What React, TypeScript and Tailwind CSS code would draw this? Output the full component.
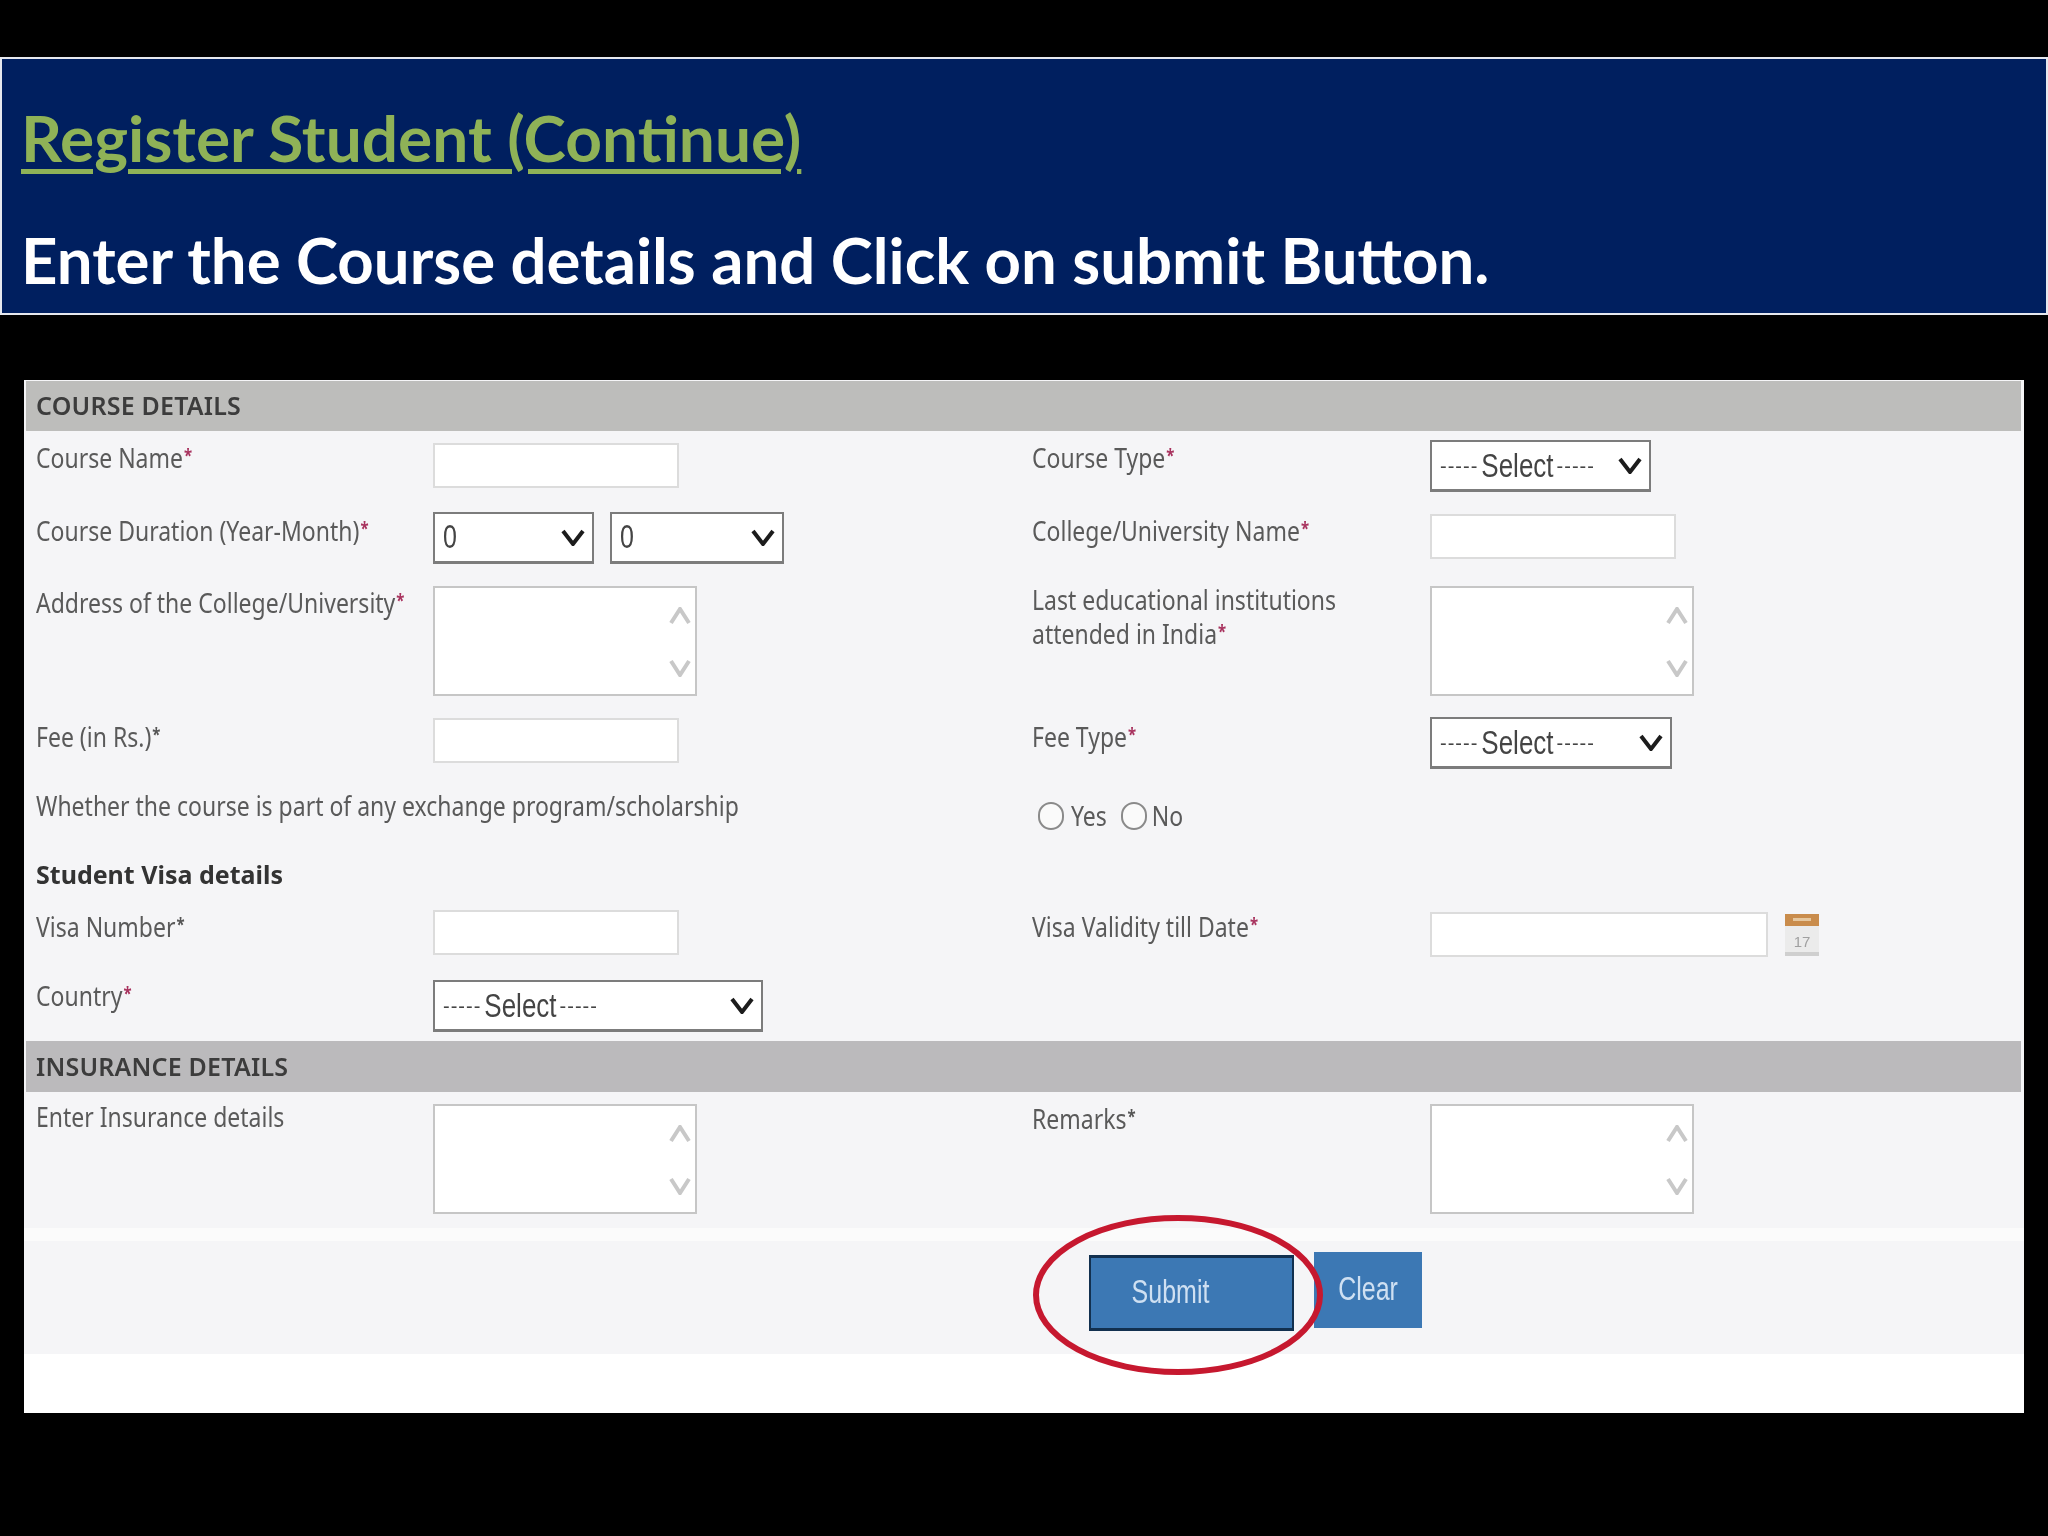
import type { ReactNode } from "react";

const Star = ({ dark = false }: { dark?: boolean }) => (
  <span className={`relative -top-[5px] ml-[1px] text-[15px] font-bold ${dark ? "text-[#555]" : "text-[#a8325e]"}`}>*</span>
);

function Label({ children, className = "" }: { children: ReactNode; className?: string }) {
  return (
    <div className={`origin-top-left scale-y-[1.2] text-[23px] leading-[29px] text-[#5a5a5a] ${className}`}>
      {children}
    </div>
  );
}

function TextBox({ className = "" }: { className?: string }) {
  return <input className={`block h-[45px] border-2 border-[#dcdcdc] bg-white ${className}`} />;
}

function Arrow({ down = false }: { down?: boolean }) {
  return (
    <svg viewBox="0 0 22 18" className="h-[18px] w-[22px]" fill="none" stroke="#c8c8c8" strokeWidth="4">
      <polyline points={down ? "2,2 11,16 20,2" : "2,16 11,2 20,16"} />
    </svg>
  );
}

function Memo({ className = "" }: { className?: string }) {
  return (
    <div className={`relative h-[110px] ${className}`}>
      <textarea className="block h-full w-full resize-none border-2 border-[#c6c6c6] bg-white" />
      <div className="absolute top-[21px] right-[6px] bottom-[19px] flex flex-col justify-between">
        <Arrow />
        <Arrow down />
      </div>
    </div>
  );
}

function SelectBox({ value, className = "" }: { value?: string; className?: string }) {
  return (
    <div className={`flex h-[52px] items-center justify-between border-2 border-b-[3px] border-[#7c7c7c] bg-white pr-[7px] pl-[8px] font-["Liberation_Sans",sans-serif] text-[#444] ${className}`}>
      {value ? (
        <span className="scale-y-[1.3] text-[25px]">{value}</span>
      ) : (
        <span className="flex items-center gap-[3px]">
          <span className="text-[20px] tracking-[1px]">-----</span>
          <span className="scale-y-[1.3] text-[26px]">Select</span>
          <span className="text-[20px] tracking-[1px]">-----</span>
        </span>
      )}
      <svg viewBox="0 0 24 17" className="h-[17px] w-[24px]" fill="none" stroke="#1c1c1c" strokeWidth="4">
        <polyline points="2,2 12,15 22,2" />
      </svg>
    </div>
  );
}

function Row({ className, children }: { className: string; children: ReactNode }) {
  return <div className={`grid grid-cols-[397px_599px_398px_1fr] pl-[12px] ${className}`}>{children}</div>;
}

function SectionBar({ title, className = "" }: { title: string; className?: string }) {
  return (
    <div className={`mr-[3px] ml-[2px] flex items-center pl-[10px] ${className}`}>
      <span className="text-[25px] font-semibold tracking-[0.2px] text-[#3c3c3c]">{title}</span>
    </div>
  );
}

function CalendarIcon() {
  return (
    <svg viewBox="0 0 34 42" className="mt-[2px] ml-[17px] h-[42px] w-[34px]">
      <rect x="0" y="0" width="34" height="12" fill="#c98c4c" />
      <rect x="8" y="4" width="18" height="3" fill="#e6c79e" />
      <rect x="0" y="12" width="34" height="30" fill="#ebebeb" />
      <rect x="0" y="38" width="34" height="4" fill="#cfcfcf" />
      <text x="17" y="33" textAnchor="middle" fontSize="15" fill="#a0a0a0" fontFamily="Liberation Sans, sans-serif">17</text>
    </svg>
  );
}

export default function App() {
  return (
    <div className="h-[1536px] overflow-hidden bg-black pt-[57px] font-['Noto_Sans',sans-serif]">
      <header className="h-[258px] border-2 border-[#e6e8ee] bg-[#001f5f] pt-[43px] pl-[19px] font-['Lato',sans-serif] font-bold">
        <h1 className="text-[64px] leading-[72px] text-[#8fb257] underline decoration-[5px] underline-offset-[7px]">
          Register Student (Continue)
        </h1>
        <p className="mt-[50px] text-[63.5px] leading-[72px] text-white">
          Enter the Course details and Click on submit Button.
        </p>
      </header>

      <main className="relative mx-[24px] mt-[65px] h-[1033px] bg-white">
        <div className="bg-[#f5f5f7] pt-[1px] blur-[0.6px]">
          <SectionBar title="COURSE DETAILS" className="h-[50px] bg-[#bdbdbb]" />

          <Row className="h-[74px]">
            <Label className="mt-[9px]">Course Name<Star /></Label>
            <TextBox className="mt-[12px] w-[246px]" />
            <Label className="mt-[9px]">Course Type<Star /></Label>
            <SelectBox className="mt-[9px] w-[221px]" />
          </Row>

          <Row className="h-[75px]">
            <Label className="mt-[8px]">Course Duration (Year-Month)<Star /></Label>
            <div className="mt-[7px] flex gap-[16px]">
              <SelectBox value="0" className="w-[161px]" />
              <SelectBox value="0" className="w-[174px]" />
            </div>
            <Label className="mt-[8px]">College/University Name<Star /></Label>
            <TextBox className="mt-[9px] w-[246px]" />
          </Row>

          <Row className="h-[130px]">
            <Label className="mt-[5px]">Address of the College/University<Star /></Label>
            <Memo className="mt-[6px] w-[264px]" />
            <Label className="mt-[2px]">
              Last educational institutions
              <br />
              attended in India<Star />
            </Label>
            <Memo className="mt-[6px] w-[264px]" />
          </Row>

          <Row className="h-[80px]">
            <Label className="mt-[9px]">Fee (in Rs.)<Star dark /></Label>
            <TextBox className="mt-[8px] w-[246px]" />
            <Label className="mt-[9px]">Fee Type<Star /></Label>
            <SelectBox className="mt-[7px] w-[242px]" />
          </Row>

          <Row className="h-[60px]">
            <Label className="col-span-2 -mt-[2px]">Whether the course is part of any exchange program/scholarship</Label>
            <div className="col-span-2 mt-[12px] flex items-start pl-[6px]">
              <span className="h-[28px] w-[26px] rounded-full border-2 border-[#8a8a8a] bg-[#fafafa]" />
              <Label className="-mt-[4px] ml-[7px]">Yes</Label>
              <span className="ml-[14px] h-[28px] w-[26px] rounded-full border-2 border-[#8a8a8a] bg-[#fafafa]" />
              <Label className="-mt-[4px] ml-[5px]">No</Label>
            </div>
          </Row>

          <div className="flex h-[50px] items-center pl-[12px] text-[25px] font-bold text-[#333]">
            Student Visa details
          </div>

          <Row className="h-[70px]">
            <Label className="mt-[9px]">Visa Number<Star dark /></Label>
            <TextBox className="mt-[10px] w-[246px]" />
            <Label className="mt-[9px]">Visa Validity till Date<Star /></Label>
            <div className="mt-[12px] flex items-start">
              <TextBox className="w-[338px]" />
              <CalendarIcon />
            </div>
          </Row>

          <Row className="h-[71px]">
            <Label className="mt-[8px]">Country<Star /></Label>
            <SelectBox className="mt-[10px] w-[330px]" />
          </Row>

          <SectionBar title="INSURANCE DETAILS" className="h-[51px] bg-[#bbbabc]" />

          <Row className="h-[136px]">
            <Label className="mt-[7px]">Enter Insurance details</Label>
            <Memo className="mt-[12px] w-[264px]" />
            <Label className="mt-[9px]">Remarks<Star dark /></Label>
            <Memo className="mt-[12px] w-[264px]" />
          </Row>

          <div className="h-[13px] bg-[#fbfbfb]" />

          <div className="ml-[9px] flex h-[113px] items-start bg-[#f5f5f7] pl-[1056px] font-['Liberation_Sans',sans-serif]">
            <button className="mt-[14px] flex h-[76px] w-[205px] items-center justify-center border-2 border-t-[3px] border-b-[3px] border-[#12304f] bg-[#3c78b4] pr-[42px] text-[#cfe0f2]">
              <span className="scale-y-[1.3] text-[25px]">Submit</span>
            </button>
            <button className="mt-[11px] ml-[20px] flex h-[76px] w-[108px] items-center justify-center bg-[#3c78b4] text-[#cfe0f2]">
              <span className="scale-y-[1.3] text-[25px]">Clear</span>
            </button>
          </div>
        </div>

        {/* red marker ring drawn over the buttons */}
        <svg viewBox="0 0 290 160" className="absolute top-[835px] left-[1009px] h-[160px] w-[290px]" fill="none">
          <ellipse cx="145" cy="80" rx="142" ry="77" stroke="#c6182f" strokeWidth="6" />
        </svg>
      </main>
    </div>
  );
}
